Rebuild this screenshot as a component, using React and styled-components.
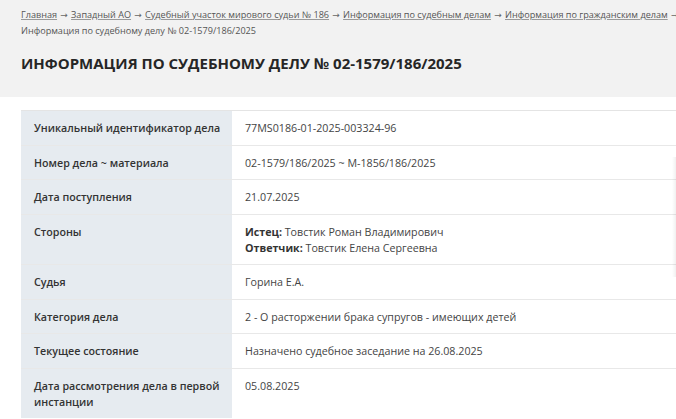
import React from 'react';
import styled, { createGlobalStyle } from 'styled-components';

const GlobalStyle = createGlobalStyle`
  html, body {
    margin: 0;
    padding: 0;
    background: #fff;
    font-family: 'Open Sans', 'Liberation Sans', sans-serif;
    overflow: hidden;
  }
`;

const crumbs = [
  'Главная',
  'Западный АО',
  'Судебный участок мирового судьи № 186',
  'Информация по судебным делам',
  'Информация по гражданским делам',
];

const rows = [
  { label: 'Уникальный идентификатор дела', value: '77MS0186-01-2025-003324-96' },
  { label: 'Номер дела ~ материала', value: '02-1579/186/2025 ~ М-1856/186/2025' },
  { label: 'Дата поступления', value: '21.07.2025' },
  {
    label: 'Стороны',
    parties: [
      { role: 'Истец', name: 'Товстик Роман Владимирович' },
      { role: 'Ответчик', name: 'Товстик Елена Сергеевна' },
    ],
  },
  { label: 'Судья', value: 'Горина Е.А.' },
  { label: 'Категория дела', value: '2 - О расторжении брака супругов - имеющих детей' },
  { label: 'Текущее состояние', value: 'Назначено судебное заседание на 26.08.2025' },
  { label: 'Дата рассмотрения дела в первой инстанции', value: '05.08.2025' },
];

const App = () => {
  return (
    <>
      <GlobalStyle />
      <Page>
        <Header>
          <Breadcrumbs>
            <Trail>
              {crumbs.map((c) => (
                <React.Fragment key={c}>
                  <Crumb href="#">{c}</Crumb>
                  <Arrow>→</Arrow>
                </React.Fragment>
              ))}
            </Trail>
            <Current>Информация по судебному делу № 02-1579/186/2025</Current>
          </Breadcrumbs>
          <Title>Информация по судебному делу № 02-1579/186/2025</Title>
        </Header>
        <Content>
          <Table>
            <tbody>
              {rows.map((r) => (
                <Row key={r.label}>
                  <Label>{r.label}</Label>
                  <Value>
                    {r.parties
                      ? r.parties.map((p) => (
                          <Party key={p.role}>
                            <b>{p.role}:</b> {p.name}
                          </Party>
                        ))
                      : r.value}
                  </Value>
                </Row>
              ))}
            </tbody>
          </Table>
          <EdgeShadow />
        </Content>
      </Page>
    </>
  );
};

const Page = styled.div`
  width: 100%;
  min-height: 419px;
`;

const Header = styled.header`
  background: #f2f2f2;
  padding: 7px 21px 0;
  height: 97px;
  box-sizing: border-box;
`;

const Breadcrumbs = styled.nav`
  font-size: 9.1px;
  line-height: 15px;
  color: #555;
`;

const Trail = styled.div`
  white-space: nowrap;
`;

const Crumb = styled.a`
  color: #555;
  text-decoration: underline;
  text-decoration-color: #999;
`;

const Arrow = styled.span`
  display: inline-block;
  width: 14px;
  text-align: center;
  font-family: 'DejaVu Sans', sans-serif;
  font-size: 9px;
  color: #666;
`;

const Current = styled.div`
  color: #555;
`;

const Title = styled.h1`
  margin: 15px 0 0;
  font-size: 15px;
  font-weight: 700;
  text-transform: uppercase;
  color: #262626;
`;

const Content = styled.main`
  position: relative;
  padding: 13px 0 0 21px;
`;

const Table = styled.table`
  width: 100%;
  border-collapse: collapse;
  border-top: 1px solid #e4e4e4;
  font-size: 10.7px;
  line-height: 16px;
`;

const Row = styled.tr`
  border-bottom: 1px solid #e8e8e8;
  &:last-child {
    border-bottom: none;
  }
`;

const Label = styled.td`
  width: 190px;
  padding: 9px 8px 8.5px 13px;
  background: #e6ebf0;
  font-weight: 600;
  color: #333;
  vertical-align: top;
`;

const Value = styled.td`
  padding: 9px 13px 8.5px;
  color: #444;
  vertical-align: top;
`;

const Party = styled.div`
  b {
    font-weight: 700;
    color: #333;
  }
`;

const EdgeShadow = styled.div`
  position: absolute;
  right: 0;
  top: 60px;
  width: 4px;
  height: 120px;
  background: linear-gradient(to right, rgba(0, 0, 0, 0), rgba(0, 0, 0, 0.06));
`;

export default App;
